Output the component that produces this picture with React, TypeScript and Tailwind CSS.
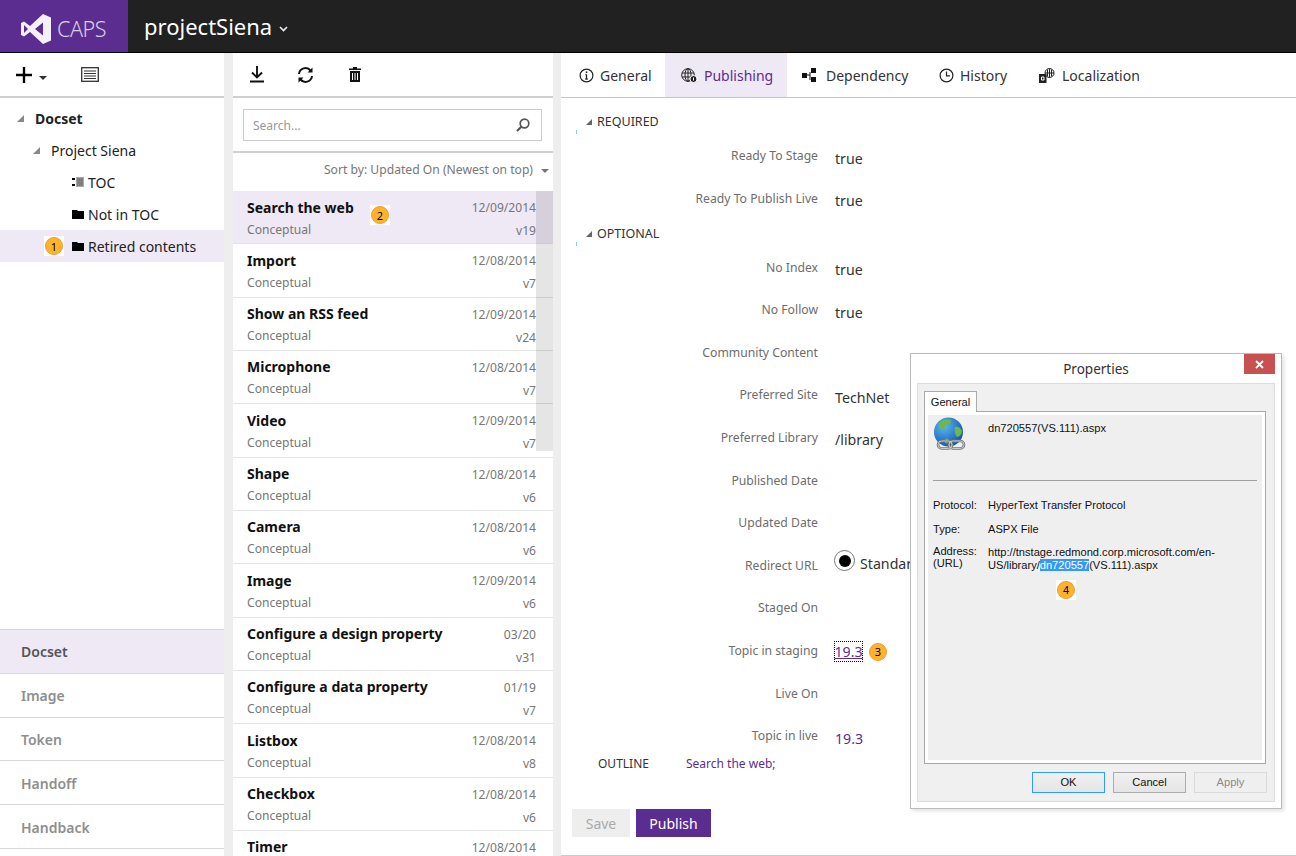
import React from "react";

const Badge = ({ n, white = true }: { n: number; white?: boolean }) => (
  <span className={`flex h-5 w-5 items-center justify-center ${white ? "bg-white" : ""}`}>
    <span className="flex h-[18px] w-[18px] items-center justify-center rounded-full border border-[#f39a2e] bg-[#fdb32b] text-[11px] leading-none text-black">{n}</span>
  </span>
);

const Caret = ({ c = "#777", s = 7 }: { c?: string; s?: number }) => (
  <svg width={s} height={s} viewBox="0 0 7 7" className="shrink-0"><path d="M7 0V7H0Z" fill={c} /></svg>
);

const Folder = () => (
  <svg width="12" height="10" viewBox="0 0 12 10"><path d="M0 1h5l1 1h6v8H0z" fill="#000" /></svg>
);

const Toc = () => (
  <svg width="12" height="10" viewBox="0 0 12 10">
    <path d="M0 1h3v2H0zM0 7h3v2H0z" fill="#000" />
    <path d="M4 0h8v10H4z" fill="#aaa" />
    <path d="M5 2h6M5 4h6M5 6h6M5 8h6" stroke="#555" strokeWidth="1" />
  </svg>
);

const tree = [
  { label: "Docset", pad: "pl-[17px]", gap: "gap-[11px]", caret: true, bold: true },
  { label: "Project Siena", pad: "pl-[33px]", gap: "gap-[11px]", caret: true },
  { label: "TOC", pad: "pl-[72px]", gap: "gap-[4px]", icon: <Toc /> },
  { label: "Not in TOC", pad: "pl-[72px]", gap: "gap-[4px]", icon: <Folder /> },
  { label: "Retired contents", pad: "pl-[72px]", gap: "gap-[4px]", icon: <Folder />, sel: true },
];

const nav = ["Docset", "Image", "Token", "Handoff", "Handback"];

const items = [
  ["Search the web", "12/09/2014", "v19"],
  ["Import", "12/08/2014", "v7"],
  ["Show an RSS feed", "12/09/2014", "v24"],
  ["Microphone", "12/08/2014", "v7"],
  ["Video", "12/09/2014", "v7"],
  ["Shape", "12/08/2014", "v6"],
  ["Camera", "12/08/2014", "v6"],
  ["Image", "12/09/2014", "v6"],
  ["Configure a design property", "03/20", "v31"],
  ["Configure a data property", "01/19", "v7"],
  ["Listbox", "12/08/2014", "v8"],
  ["Checkbox", "12/08/2014", "v6"],
  ["Timer", "12/08/2014", ""],
];

const Info = () => (
  <svg width="15" height="15" viewBox="0 0 15 15" fill="none" stroke="#222"><circle cx="7.5" cy="7.5" r="6.4" strokeWidth="1.2" /><path d="M7.5 6.5v4.5M6.3 11h2.4M6.5 6.5h1" strokeWidth="1.3" /><rect x="6.8" y="3.4" width="1.5" height="1.6" fill="#222" stroke="none" /></svg>
);
const Globe = () => (
  <svg width="17" height="15" viewBox="0 0 17 15" fill="none" stroke="#222" strokeWidth="1"><circle cx="7" cy="7" r="6.3" /><ellipse cx="7" cy="7" rx="3" ry="6.3" /><path d="M1 5h12M1 9h12M7 .7v12.6" /><circle cx="12.5" cy="11" r="3.5" fill="#222" stroke="#fff" /><path d="M12.5 9.5v3" stroke="#fff" /></svg>
);
const Dep = () => (
  <svg width="15" height="14" viewBox="0 0 15 14"><path d="M9 0h5v5H9zM0 5h5v5H0zM9 9h5v5H9z" fill="#111" /><path d="M5 7h3M8 4v8" stroke="#111" fill="none" /></svg>
);
const Clock = () => (
  <svg width="15" height="15" viewBox="0 0 15 15" fill="none" stroke="#222" strokeWidth="1.2"><circle cx="7.5" cy="7.5" r="6.4" /><path d="M7.5 3.5v4.3h3.4" /></svg>
);
const Loc = () => (
  <svg width="16" height="15" viewBox="0 0 16 15" fill="none" stroke="#222"><circle cx="10.5" cy="5" r="4.5" fill="#fff" /><path d="M6 5h9M10.5.5v9M8.5 1.5v7M12.5 1.5v7" /><rect x=".5" y="6.5" width="6.5" height="8" fill="#222" /><path d="M2.5 9h2.5v3h-2.5z" stroke="#fff" /></svg>
);

const tabs = [
  { label: "General", icon: <Info />, cls: "w-[104px] pl-[18px] gap-[6px]" },
  { label: "Publishing", icon: <Globe />, cls: "w-[122px] pl-[16px] gap-[6px]", sel: true },
  { label: "Dependency", icon: <Dep />, cls: "w-[139px] pl-[15px] gap-[9px]" },
  { label: "History", icon: <Clock />, cls: "w-[95px] pl-[13px] gap-[6px]" },
  { label: "Localization", icon: <Loc />, cls: "w-[130px] pl-[18px] gap-[7px]" },
];

const Row = ({ label, children }: { label: string; children?: React.ReactNode }) => (
  <div className="flex h-[42.6px] items-start">
    <div className="w-[257px] pt-[1px] text-right text-[12.2px] leading-[18px] text-[#6d6d6d]">{label}</div>
    <div className="flex items-center pl-[17px] pt-[2.5px] text-[14.2px] leading-[20px] text-[#333]">{children}</div>
  </div>
);

const Section = ({ label }: { label: string }) => (
  <div className="flex h-[18px] items-center gap-[5px] pl-[25px] text-[12.5px] text-[#333]">
    <span className="relative">
      <Caret c="#666" s={6} />
      <span className="absolute left-[-10px] top-[11px] h-[4px] w-[1px] bg-[#7fd4d4]" />
    </span>
    {label}
  </div>
);

const GlobeLink = () => (
  <svg width="34" height="34" viewBox="0 0 34 34">
    <defs>
      <radialGradient id="g" cx="0.35" cy="0.3" r="0.8">
        <stop offset="0" stopColor="#5bb8f5" />
        <stop offset="1" stopColor="#0a4fa8" />
      </radialGradient>
    </defs>
    <circle cx="15.5" cy="15" r="14.5" fill="url(#g)" />
    <path d="M6 6c4-4 9-4 12-3 1 3-3 5-6 6 1 3-2 4-4 3-2-1-3-4-2-6zM22 10c3-1 5 0 7 4 0 3-3 6-5 6-2-2-3-7-2-10zM12 22c2-1 4 0 5 2-1 2-3 3-5 2z" fill="#6db84a" />
    <g fill="none" stroke="#777" strokeWidth="2.6">
      <rect x="5" y="24" width="14" height="7.5" rx="3.7" />
      <rect x="16" y="24" width="15" height="7.5" rx="3.7" />
    </g>
    <g fill="none" stroke="#ddd" strokeWidth="0.8">
      <rect x="5" y="24" width="14" height="7.5" rx="3.7" />
      <rect x="16" y="24" width="15" height="7.5" rx="3.7" />
    </g>
  </svg>
);

const Prop = ({ label, children, tall }: { label: React.ReactNode; children: React.ReactNode; tall?: boolean }) => (
  <div className="flex leading-[12px]">
    <div className="w-[55px] shrink-0">{label}</div>
    <div className={tall ? "pt-[1px] leading-[13px]" : ""}>{children}</div>
  </div>
);

const Dialog = () => (
  <div className="absolute left-[910px] top-[353px] flex h-[456px] w-[372px] flex-col border border-[#bbb] bg-white px-[6px] pb-[6px] font-['Liberation_Sans',sans-serif] text-[11.1px] text-[#111] shadow-[2px_2px_4px_rgba(0,0,0,0.12)]">
    <div className="relative h-[29px] shrink-0 pt-[5px] text-center font-['Noto_Sans',sans-serif] text-[13.5px] leading-[20px] text-[#333]">
      Properties
      <span className="absolute right-0 top-0 flex h-[20px] w-[31px] items-center justify-center bg-[#c75050]">
        <svg width="9" height="9" viewBox="0 0 9 9"><path d="M1 1l7 7M8 1l-7 7" stroke="#fff" strokeWidth="1.8" /></svg>
      </span>
    </div>
    <div className="flex flex-1 flex-col border border-[#dcdcdc] bg-[#f0f0f0] px-[6px] pt-[7px]">
      <div className="relative z-10 mb-[-1px] flex h-[21px] w-[53px] items-center justify-center border border-b-0 border-[#aaa] bg-white">General</div>
      <div className="flex h-[353px] w-[342px] flex-col border border-[#a8a8a8] bg-white p-[3px]">
        <div className="relative flex-1 bg-[#efefef] px-[5px]">
          <div className="flex h-[65px] items-start gap-[21px] pt-[2px]">
            <GlobeLink />
            <span className="pt-[3px]">dn720557(VS.111).aspx</span>
          </div>
          <div className="h-px bg-[#a0a0a0]" />
          <div className="mt-[18px] flex flex-col">
            <Prop label="Protocol:">HyperText Transfer Protocol</Prop>
            <div className="h-[12px]" />
            <Prop label="Type:">ASPX File</Prop>
            <div className="h-[10px]" />
            <Prop tall label={<>Address:<br />(URL)</>}>
              http://tnstage.redmond.corp.microsoft.com/en-<br />US/library/<span className="bg-[#3399ff] text-white">dn720557</span>(VS.111).aspx
            </Prop>
          </div>
          <span className="absolute left-[128px] top-[165px]"><Badge n={4} /></span>
        </div>
      </div>
      <div className="mr-[1px] mt-[8px] flex justify-end gap-[8px]">
        <button className="h-[21px] w-[73px] border border-[#2e9bff] bg-gradient-to-b from-[#f0f0f0] to-[#e5e5e5]">OK</button>
        <button className="h-[21px] w-[73px] border border-[#acacac] bg-gradient-to-b from-[#f0f0f0] to-[#e5e5e5]">Cancel</button>
        <button className="h-[21px] w-[73px] border border-[#d9d9d9] bg-[#efefef] text-[#8a8a8a]">Apply</button>
      </div>
    </div>
  </div>
);

export default function App() {
  return (
    <div className="relative flex h-[856px] w-[1296px] flex-col overflow-hidden bg-white font-['Noto_Sans',sans-serif]">
      {/* Header */}
      <header className="flex h-[53px] shrink-0 items-stretch border-b border-black bg-[#212121]">
        <div className="flex w-[128px] items-center gap-[6px] bg-[#5c2d91] pl-[21px] pt-[6px] text-[21.5px] font-light text-[#d8cde6]">
          <svg width="30" height="30" viewBox="0 0 30 30">
            <path d="M22 0l8 3.5v23L22 30 9 18l-6 4.500L0 21V9l3-1.500L9 12zM22 8.500L14 15l8 6.500zM3 11v8l4-4z" fill="#f4eff9" fillRule="evenodd" />
          </svg>
          <span className="tracking-[-0.5px]">CAPS</span>
        </div>
        <div className="flex items-center gap-[7px] pl-[16px] text-[22px] text-white">
          projectSiena
          <svg width="9" height="6" viewBox="0 0 9 6" className="mt-[6px]"><path d="M1 1l3.500 3.500L8 1" fill="none" stroke="#eee" strokeWidth="1.6" /></svg>
        </div>
      </header>

      <div className="flex min-h-0 flex-1">
        {/* Left panel */}
        <aside className="flex w-[224px] shrink-0 flex-col">
          <div className="flex h-[45px] shrink-0 items-center border-b-2 border-[#d0d0d0] pl-[16px]">
            <svg width="16" height="16" viewBox="0 0 16 16"><path d="M8 0v16M0 8h16" stroke="#000" strokeWidth="2.4" /></svg>
            <svg width="8" height="4" viewBox="0 0 8 4" className="ml-[7px] mt-[6px]"><path d="M0 0h8L4 4z" fill="#333" /></svg>
            <svg width="18" height="15" viewBox="0 0 18 15" fill="none" className="ml-[34px]"><rect x=".7" y=".7" width="16.600" height="13.600" stroke="#333" strokeWidth="1.300" /><path d="M3 4h12M3 6.500h12M3 9h12M3 11.500h12" stroke="#333" /></svg>
          </div>
          <div className="flex-1 pt-[4px]">
            {tree.map((t) => (
              <div key={t.label} className={`relative flex h-[32px] items-center ${t.pad} ${t.gap} text-[14px] ${t.sel ? "bg-[#efe8f5]" : ""} ${t.bold ? "font-bold" : ""} text-[#222]`}>
                {t.caret && <Caret c="#888" />}
                {t.icon}
                <span>{t.label}</span>
                {t.sel && <span className="absolute left-[44px] top-[6px]"><Badge n={1} /></span>}
              </div>
            ))}
          </div>
          <nav className="mb-[7px] shrink-0 border-t border-[#d8d8d8]">
            {nav.map((n, i) => (
              <div key={n} className={`flex h-[43.800px] items-center border-b border-[#d8d8d8] pl-[21px] pt-[1px] text-[14px] font-semibold ${i === 0 ? "bg-[#efe8f5] text-[#555]" : "text-[#8e8e8e]"}`}>{n}</div>
            ))}
          </nav>
        </aside>

        <div className="w-[9px] shrink-0 bg-[#eeeeee]" />

        {/* Middle panel */}
        <section className="flex w-[320px] shrink-0 flex-col">
          <div className="flex h-[45px] shrink-0 items-center border-b-2 border-[#d0d0d0] pl-[16px]">
            <svg width="16" height="17" viewBox="0 0 16 17" fill="none" stroke="#111"><path d="M8 0v11M3 6.500l5 5 5-5" strokeWidth="1.900" /><path d="M1 15.500h14" strokeWidth="2" /></svg>
            <svg width="17" height="16" viewBox="0 0 17 16" fill="none" stroke="#111" strokeWidth="2" className="ml-[32px]"><path d="M2 7a6.500 6.500 0 0 1 11.500-3.500M15 9a6.500 6.500 0 0 1-11.500 3.500" /><path d="M15.500 0.500v5h-5zM1.500 15.500v-5h5z" fill="#111" stroke="none" /></svg>
            <svg width="12" height="15" viewBox="0 0 12 15" className="ml-[35px]"><path d="M4 0h4v1.500h4V3H0V1.500h4zM1 4h10v11H1z" fill="#111" /><path d="M3.500 6v7M6 6v7M8.500 6v7" stroke="#fff" strokeWidth="1" /></svg>
          </div>
          <div className="shrink-0 border-b-2 border-[#d0d0d0] px-[10px] pb-[10px] pt-[11px]">
            <div className="flex h-[32px] w-[299px] items-center justify-between border border-[#ccc] pl-[9px] pr-[11px] text-[12px] text-[#999]">
              <span className="pt-[1px]">Search...</span>
              <svg width="14" height="14" viewBox="0 0 14 14" fill="none" stroke="#555" strokeWidth="1.700"><circle cx="8.500" cy="5.500" r="4.300" /><path d="M5.500 8.500L1 13" strokeWidth="2.200" /></svg>
            </div>
          </div>
          <div className="flex h-[38px] shrink-0 items-center justify-end gap-[8px] pb-[3px] pr-[4px] text-[12.15px] text-[#777]">
            Sort by: Updated On (Newest on top)
            <svg width="8" height="4" viewBox="0 0 8 4"><path d="M0 0h8L4 4z" fill="#777" /></svg>
          </div>
          <div className="relative min-h-0 flex-1 overflow-hidden">
            {items.map((it, i) => (
              <div key={it[0]} className={`relative flex h-[53.330px] shrink-0 justify-between border-b border-[#e3e3e3] pl-[14px] pr-[17px] ${i === 0 ? "bg-[#efe8f5]" : ""}`}>
                <div className="pt-[5.500px]">
                  <div className="text-[14px] font-bold leading-[22px] text-[#111]">{it[0]}</div>
                  {it[2] && <div className="text-[12.100px] leading-[22.500px] text-[#777]">Conceptual</div>}
                </div>
                <div className="pt-[5px] text-right text-[12.100px] leading-[23px] text-[#777]">
                  <div>{it[1]}</div>
                  {it[2] && <div>{it[2]}</div>}
                </div>
                {i === 0 && <span className="absolute left-[137px] top-[14px]"><Badge n={2} /></span>}
              </div>
            ))}
            <div className="absolute right-0 top-0 h-[260px] w-[17px] bg-black/10" />
          </div>
        </section>

        <div className="w-[8px] shrink-0 bg-[#eeeeee]" />

        {/* Right panel */}
        <main className="flex min-w-0 flex-1 flex-col border-b border-[#ccc]">
          <div className="flex h-[45px] shrink-0 border-b border-[#c8c4cc]">
            {tabs.map((t) => (
              <div key={t.label} className={`flex ${t.cls} items-center text-[14px] ${t.sel ? "bg-[#efe8f5] text-[#5c2d91]" : "text-[#333]"}`}>
                {t.icon}
                {t.label}
              </div>
            ))}
          </div>
          <div className="flex-1 pt-[15px]">
            <Section label="REQUIRED" />
            <div className="mt-[15px]">
              <Row label="Ready To Stage"><span>true</span></Row>
              <Row label="Ready To Publish Live"><span>true</span></Row>
            </div>
            <div className="-mt-[6px]"><Section label="OPTIONAL" /></div>
            <div className="mt-[14.4px]">
              <Row label="No Index">true</Row>
              <Row label="No Follow">true</Row>
              <Row label="Community Content" />
              <Row label="Preferred Site">TechNet</Row>
              <Row label="Preferred Library">/library</Row>
              <Row label="Published Date" />
              <Row label="Updated Date" />
              <Row label="Redirect URL">
                <span className="-mt-[8px] flex items-start gap-[5px]">
                  <span className="flex h-[21px] w-[21px] -ml-[1px] items-center justify-center rounded-full border border-[#777]"><span className="h-[12px] w-[12px] rounded-full bg-black" /></span>
                  <span className="pt-[4px]">Standard</span>
                </span>
              </Row>
              <Row label="Staged On" />
              <Row label="Topic in staging">
                <span className="-ml-[1px] -mt-[2px] flex items-center gap-[5px]">
                  <span className="flex h-[21px] w-[29px] items-center justify-center border border-dotted border-black text-[#5c2d91] underline">19.3</span>
                  <Badge n={3} white={false} />
                </span>
              </Row>
              <Row label="Live On" />
              <Row label="Topic in live"><span className="text-[#5c2d91]">19.3</span></Row>
            </div>
            <div className="-mt-[13.4px] flex pl-[37px] text-[12px] leading-[18px]">
              <span className="w-[88px] text-[#333]">OUTLINE</span>
              <span className="text-[#5c2d91]">Search the web;</span>
            </div>
            <div className="mt-[36px] flex gap-[6px] pl-[11px] text-[14px]">
              <button className="h-[28px] w-[58px] bg-[#eeeeee] text-[#aaa]">Save</button>
              <button className="h-[28px] w-[75px] bg-[#5c2d91] text-white">Publish</button>
            </div>
          </div>
        </main>
      </div>
      <Dialog />
    </div>
  );
}
